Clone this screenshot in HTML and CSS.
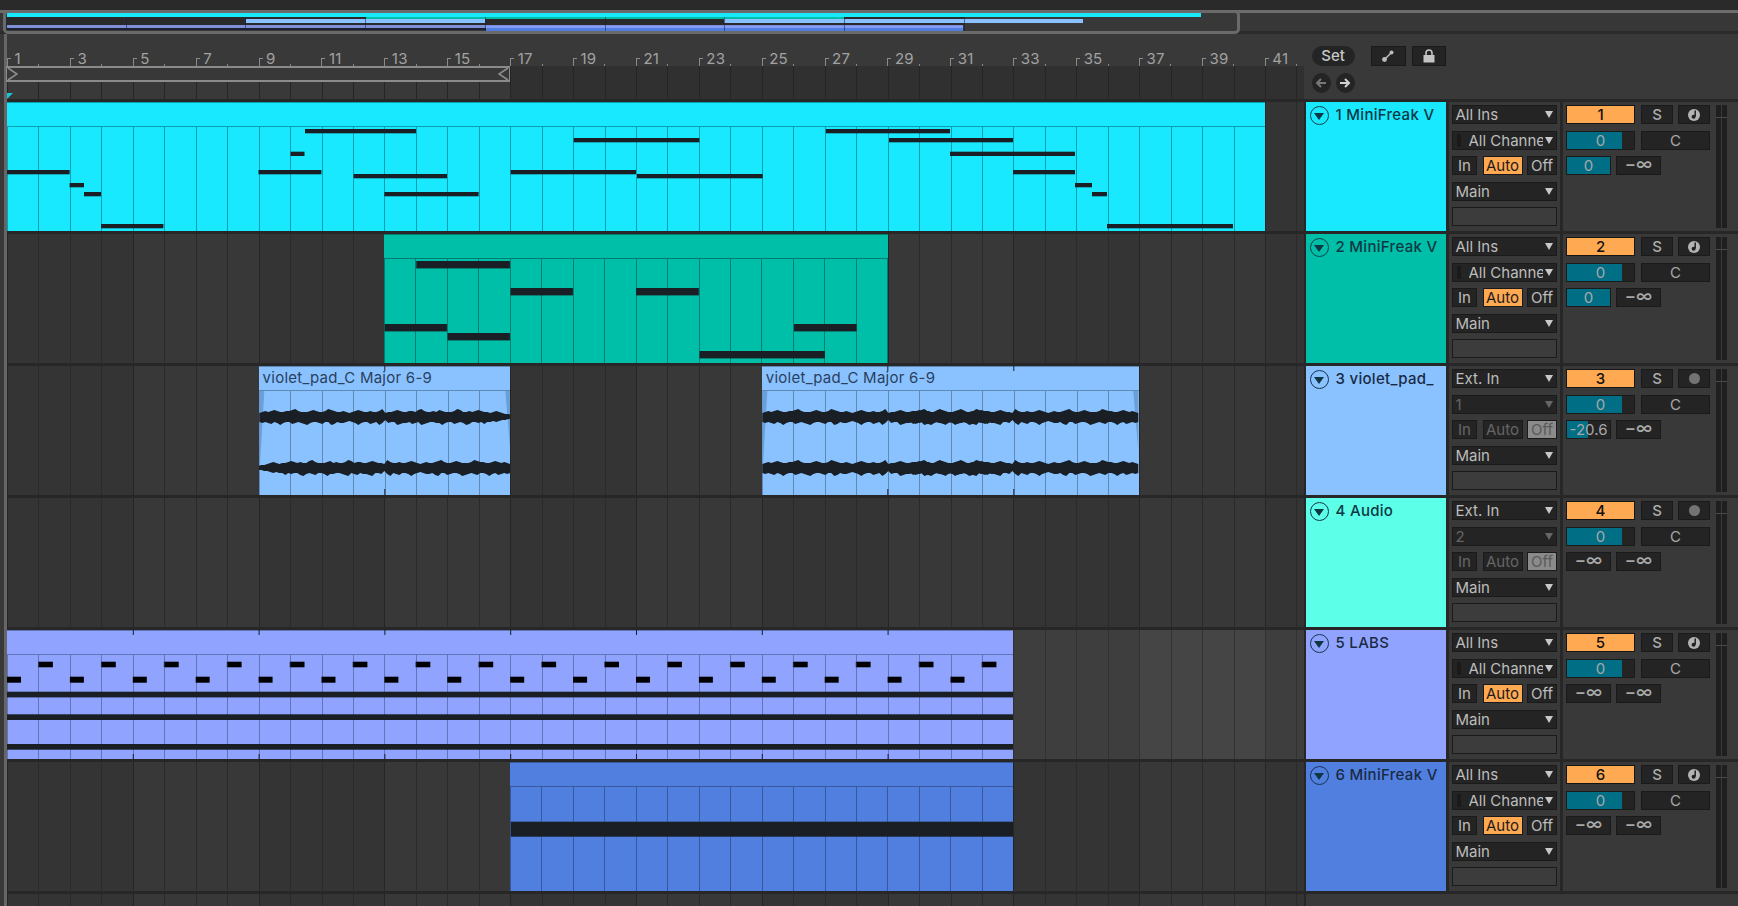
FILE: index.html
```html
<!DOCTYPE html>
<html lang="en">
<head>
<meta charset="utf-8">
<title>Arrangement</title>
<link rel="stylesheet" href="styles.css">
</head>
<body>
<svg class="defs" width="0" height="0" aria-hidden="true">
  <defs>
    <path id="wave" d="M0-4L3-5 6-6 9-5 12-6 15-7 18-6 21-5 24-5 27-6 30-6 33-7 36-8 39-6 42-5 45-5 48-5 51-6 54-7 57-6 60-5 63-5 66-6 69-8 72-7 75-6 78-5 81-5 84-6 87-5 90-4 93-5 96-6 99-7 102-6 105-5 108-5 111-6 114-5 117-5 120-6 123-8 126-4 129-5 132-5 135-6 138-7 141-6 144-5 147-5 150-6 153-6 156-5 159-7 162-8 165-6 168-5 171-5 174-6 177-5 180-7 183-6 186-5 189-5 192-5 195-6 198-8 201-7 204-5 207-5 210-6 213-5 216-6 219-7 222-6 225-5 228-5 231-4 234-5 237-6 240-5 243-4 246-3 249-3 252-2V2L249 2 246 3 243 3 240 4 237 5 234 4 231 5 228 5 225 7 222 5 219 6 216 5 213 5 210 7 207 8 204 6 201 5 198 6 195 7 192 5 189 5 186 6 183 8 180 6 177 6 174 5 171 5 168 6 165 7 162 8 159 5 156 6 153 7 150 5 147 6 144 6 141 7 138 8 135 5 132 5 129 6 126 3 123 6 120 8 117 5 114 6 111 7 108 5 105 5 102 6 99 8 96 6 93 5 90 4 87 5 84 6 81 6 78 5 75 7 72 8 69 5 66 5 63 7 60 6 57 5 54 5 51 6 48 8 45 7 42 6 39 5 36 6 33 7 30 5 27 5 24 6 21 8 18 6 15 5 12 7 9 6 6 5 3 6 0 5Z"/>
    <pattern id="labs" x="7" y="630" width="62.9" height="129" patternUnits="userSpaceOnUse">
      <rect x="0" y="46.7" width="14" height="6"/>
      <rect x="31.4" y="31.7" width="14.5" height="5.6"/>
    </pattern>
  </defs>
</svg>
<div class="app">
  <div class="overview">
    <div class="ov-strip"></div>
    <div class="ov-box">
      <i class="ov ov-dark"></i>
      <i class="ov ov-cyan"></i>
      <i class="ov ov-teal"></i>
      <i class="ov ov-violet-a"></i>
      <i class="ov ov-violet-b"></i>
      <i class="ov ov-blue"></i>
      <i class="ov ov-labs"></i>
      <i class="ov ov-labs-under"></i>
      <i class="ov ov-ticks"></i>
    </div>
  </div>

  <div class="main">
    <div class="head">
      <div class="arr-head">
        <div class="ruler">
          <span class="bar">1</span><span class="bar">3</span><span class="bar">5</span><span class="bar">7</span><span class="bar">9</span><span class="bar">11</span><span class="bar">13</span><span class="bar">15</span><span class="bar">17</span><span class="bar">19</span><span class="bar">21</span><span class="bar">23</span><span class="bar">25</span><span class="bar">27</span><span class="bar">29</span><span class="bar">31</span><span class="bar">33</span><span class="bar">35</span><span class="bar">37</span><span class="bar">39</span><span class="bar">41</span>
        </div>
        <div class="loopzone">
          <div class="loop">
            <svg class="loop-l" width="11" height="14" viewBox="0 0 11 14"><path d="M1 1L10 7 1 13" fill="none" stroke="#8c8c8c" stroke-width="1.6"/></svg>
            <svg class="loop-r" width="11" height="14" viewBox="0 0 11 14"><path d="M10 1L1 7 10 13" fill="none" stroke="#8c8c8c" stroke-width="1.6"/></svg>
          </div>
          <i class="playhead"></i>
        </div>
      </div>
      <div class="head-ctl">
        <div class="head-row">
          <button class="set">Set</button>
          <button class="sq">
            <svg width="14" height="14" viewBox="0 0 14 14"><path d="M3.5 10.5L10.5 3.5" stroke="#bdbdbd" stroke-width="1.4"/><circle cx="3.5" cy="10.5" r="2.4" fill="#bdbdbd"/><circle cx="10.5" cy="3.5" r="2" fill="#bdbdbd"/></svg>
          </button>
          <button class="sq">
            <svg width="14" height="14" viewBox="0 0 14 14"><rect x="1.5" y="6" width="11" height="7.5" fill="#c4c4c4"/><path d="M4 6.5V4a3 3 0 0 1 6 0v2.5" fill="none" stroke="#c4c4c4" stroke-width="1.6"/></svg>
          </button>
        </div>
        <div class="head-row arrows">
          <button class="round">
            <svg width="12" height="12" viewBox="0 0 12 12"><path d="M11 6H3M6 2L2 6 6 10" fill="none" stroke="#777" stroke-width="2"/></svg>
          </button>
          <button class="round">
            <svg width="12" height="12" viewBox="0 0 12 12"><path d="M1 6H9M6 2L10 6 6 10" fill="none" stroke="#d2d2d2" stroke-width="2"/></svg>
          </button>
        </div>
      </div>
    </div>

    <!-- Track 1 -->
    <div class="track t1">
      <div class="lane">
        <div class="clip clip-1">
          <div class="clip-title"></div>
          <div class="clip-body"></div>
          <svg class="notes" viewBox="7 102 1258 129">
            <rect x="7" y="170" width="62.6" height="4.3"/>
            <rect x="69.6" y="183" width="14.4" height="4.3"/>
            <rect x="84" y="192" width="17" height="4.3"/>
            <rect x="101" y="224" width="62.4" height="4.3"/>
            <rect x="258.5" y="170" width="62.9" height="4.3"/>
            <rect x="290.6" y="151.7" width="13.9" height="4.3"/>
            <rect x="305" y="129" width="111" height="4.3"/>
            <rect x="353.6" y="174" width="93.4" height="4.3"/>
            <rect x="384.4" y="192" width="94.2" height="4.3"/>
            <rect x="510.7" y="170" width="125.3" height="4.3"/>
            <rect x="573.7" y="138" width="125.7" height="4.3"/>
            <rect x="637" y="174" width="125.7" height="4.3"/>
            <rect x="825.8" y="129" width="124.2" height="4.3"/>
            <rect x="889" y="138" width="124" height="4.3"/>
            <rect x="950" y="151.7" width="125" height="4.3"/>
            <rect x="1013" y="170" width="62" height="4.3"/>
            <rect x="1075" y="183" width="17" height="4.3"/>
            <rect x="1092" y="192" width="15" height="4.3"/>
            <rect x="1107" y="224" width="126" height="4.3"/>
          </svg>
        </div>
      </div>
      <div class="thead"><span class="fold"><i></i></span><span class="tname">1 MiniFreak V</span></div>
      <div class="io">
        <div class="sel">All Ins</div>
        <div class="sel chan"><b></b><span class="chan-text">All Channel</span></div>
        <div class="mon"><span class="mbtn m-in">In</span><span class="mbtn m-auto on">Auto</span><span class="mbtn m-off">Off</span></div>
        <div class="sel">Main</div>
        <div class="blank"></div>
      </div>
      <div class="mix">
        <div class="mix-main">
          <div class="mrow"><span class="num">1</span><span class="btn solo">S</span><span class="btn solo"><svg width="14" height="14" viewBox="0 0 14 14"><circle cx="7" cy="7" r="6" fill="#b4b4b4"/><path d="M8.2 2.6V8.6" stroke="#1f1f1f" stroke-width="1.5"/><circle cx="6.6" cy="8.8" r="2" fill="#1f1f1f"/></svg></span></div>
          <div class="mrow"><span class="val wide"><i class="fill f-vol"></i><em>0</em></span><span class="val wide">C</span></div>
          <div class="mrow"><span class="val half"><i class="fill f-full"></i><em>0</em></span><span class="val half inf">−∞</span></div>
        </div>
        <div class="meter"><i></i><i></i></div>
      </div>
    </div>

    <!-- Track 2 -->
    <div class="track t2">
      <div class="lane">
        <div class="clip clip-2">
          <div class="clip-title"></div>
          <div class="clip-body"></div>
          <svg class="notes" viewBox="384.4 234 503.2 129">
            <rect x="416.7" y="261" width="93.6" height="7.4"/>
            <rect x="385" y="324" width="62.3" height="7.4"/>
            <rect x="448" y="333" width="62.3" height="7.4"/>
            <rect x="511" y="288" width="62.3" height="7.4"/>
            <rect x="636.5" y="288" width="62.7" height="7.4"/>
            <rect x="700" y="351" width="125.3" height="7.4"/>
            <rect x="794.5" y="324" width="62.5" height="7.4"/>
          </svg>
        </div>
      </div>
      <div class="thead"><span class="fold"><i></i></span><span class="tname">2 MiniFreak V</span></div>
      <div class="io">
        <div class="sel">All Ins</div>
        <div class="sel chan"><b></b><span class="chan-text">All Channel</span></div>
        <div class="mon"><span class="mbtn m-in">In</span><span class="mbtn m-auto on">Auto</span><span class="mbtn m-off">Off</span></div>
        <div class="sel">Main</div>
        <div class="blank"></div>
      </div>
      <div class="mix">
        <div class="mix-main">
          <div class="mrow"><span class="num">2</span><span class="btn solo">S</span><span class="btn solo"><svg width="14" height="14" viewBox="0 0 14 14"><circle cx="7" cy="7" r="6" fill="#b4b4b4"/><path d="M8.2 2.6V8.6" stroke="#1f1f1f" stroke-width="1.5"/><circle cx="6.6" cy="8.8" r="2" fill="#1f1f1f"/></svg></span></div>
          <div class="mrow"><span class="val wide"><i class="fill f-vol"></i><em>0</em></span><span class="val wide">C</span></div>
          <div class="mrow"><span class="val half"><i class="fill f-full"></i><em>0</em></span><span class="val half inf">−∞</span></div>
        </div>
        <div class="meter"><i></i><i></i></div>
      </div>
    </div>

    <!-- Track 3 -->
    <div class="track t3">
      <div class="lane">
        <div class="clip clip-3a">
          <div class="clip-title">violet_pad_C Major 6-9</div>
          <div class="clip-body"></div>
          <svg class="notes wavef" viewBox="258.7 366 251.6 129">
            <path class="fade" d="M259 391h5l-5 85zM510 391h-5l5 60z"/>
            <use href="#wave" transform="translate(259,417)"/>
            <use href="#wave" transform="translate(510,468) scale(-1,1)"/>
            <path class="tick" d="M384 366h1v5h-1zM384 489h1v6h-1z"/>
          </svg>
        </div>
        <div class="clip clip-3b">
          <div class="clip-title">violet_pad_C Major 6-9</div>
          <div class="clip-body"></div>
          <svg class="notes wavef" viewBox="762.7 366 377.4 129">
            <path class="fade" d="M763 391h5l-5 85zM1139 391h-5l5 60z"/>
            <use href="#wave" transform="translate(763,417)"/>
            <use href="#wave" transform="translate(1139,417) scale(-1,1)"/>
            <use href="#wave" transform="translate(763,468)"/>
            <use href="#wave" transform="translate(1139,468) scale(-1,1)"/>
            <path class="tick" d="M888 366h1v5h-1zM888 489h1v6h-1zM1014 366h1v5h-1zM1014 489h1v6h-1z"/>
          </svg>
        </div>
      </div>
      <div class="thead"><span class="fold"><i></i></span><span class="tname">3 violet_pad_</span></div>
      <div class="io">
        <div class="sel">Ext. In</div>
        <div class="sel dim">1</div>
        <div class="mon"><span class="mbtn m-in dimt">In</span><span class="mbtn m-auto dimt">Auto</span><span class="mbtn m-off offon">Off</span></div>
        <div class="sel">Main</div>
        <div class="blank"></div>
      </div>
      <div class="mix">
        <div class="mix-main">
          <div class="mrow"><span class="num">3</span><span class="btn solo">S</span><span class="btn solo"><i class="arm"></i></span></div>
          <div class="mrow"><span class="val wide"><i class="fill f-vol"></i><em>0</em></span><span class="val wide">C</span></div>
          <div class="mrow"><span class="val half"><i class="fill f-half"></i><em>-20.6</em></span><span class="val half inf">−∞</span></div>
        </div>
        <div class="meter"><i></i><i></i></div>
      </div>
    </div>

    <!-- Track 4 -->
    <div class="track t4">
      <div class="lane"></div>
      <div class="thead"><span class="fold"><i></i></span><span class="tname">4 Audio</span></div>
      <div class="io">
        <div class="sel">Ext. In</div>
        <div class="sel dim">2</div>
        <div class="mon"><span class="mbtn m-in dimt">In</span><span class="mbtn m-auto dimt">Auto</span><span class="mbtn m-off offon">Off</span></div>
        <div class="sel">Main</div>
        <div class="blank"></div>
      </div>
      <div class="mix">
        <div class="mix-main">
          <div class="mrow"><span class="num">4</span><span class="btn solo">S</span><span class="btn solo"><i class="arm"></i></span></div>
          <div class="mrow"><span class="val wide"><i class="fill f-vol"></i><em>0</em></span><span class="val wide">C</span></div>
          <div class="mrow"><span class="val half inf">−∞</span><span class="val half inf">−∞</span></div>
        </div>
        <div class="meter"><i></i><i></i></div>
      </div>
    </div>

    <!-- Track 5 -->
    <div class="track t5">
      <div class="lane lit">
        <div class="clip clip-5">
          <div class="clip-title"></div>
          <div class="clip-body"></div>
          <svg class="notes" viewBox="7 630 1006.4 129">
            <rect x="7" y="630" width="1006.4" height="129" fill="url(#labs)"/>
            <rect x="7" y="691.7" width="1006.4" height="5.7"/>
            <rect x="7" y="714.3" width="1006.4" height="5.7"/>
            <rect x="7" y="744" width="1006.4" height="5.7"/>
            <path d="M132.8 630h1v5h-1zM132.8 754h1v5h-1zM258.6 630h1v5h-1zM258.6 754h1v5h-1zM384.4 630h1v5h-1zM384.4 754h1v5h-1zM510.2 630h1v5h-1zM510.2 754h1v5h-1zM636 630h1v5h-1zM636 754h1v5h-1zM761.8 630h1v5h-1zM761.8 754h1v5h-1zM887.6 630h1v5h-1zM887.6 754h1v5h-1z"/>
          </svg>
        </div>
      </div>
      <div class="thead"><span class="fold"><i></i></span><span class="tname">5 LABS</span></div>
      <div class="io">
        <div class="sel">All Ins</div>
        <div class="sel chan"><b></b><span class="chan-text">All Channel</span></div>
        <div class="mon"><span class="mbtn m-in">In</span><span class="mbtn m-auto on">Auto</span><span class="mbtn m-off">Off</span></div>
        <div class="sel">Main</div>
        <div class="blank"></div>
      </div>
      <div class="mix">
        <div class="mix-main">
          <div class="mrow"><span class="num">5</span><span class="btn solo">S</span><span class="btn solo"><svg width="14" height="14" viewBox="0 0 14 14"><circle cx="7" cy="7" r="6" fill="#b4b4b4"/><path d="M8.2 2.6V8.6" stroke="#1f1f1f" stroke-width="1.5"/><circle cx="6.6" cy="8.8" r="2" fill="#1f1f1f"/></svg></span></div>
          <div class="mrow"><span class="val wide"><i class="fill f-vol"></i><em>0</em></span><span class="val wide">C</span></div>
          <div class="mrow"><span class="val half inf">−∞</span><span class="val half inf">−∞</span></div>
        </div>
        <div class="meter"><i></i><i></i></div>
      </div>
    </div>

    <!-- Track 6 -->
    <div class="track t6">
      <div class="lane">
        <div class="clip clip-6">
          <div class="clip-title"></div>
          <div class="clip-body"></div>
          <svg class="notes" viewBox="510.2 762 503.2 129">
            <rect x="511" y="821.7" width="502.4" height="15"/>
          </svg>
        </div>
      </div>
      <div class="thead"><span class="fold"><i></i></span><span class="tname">6 MiniFreak V</span></div>
      <div class="io">
        <div class="sel">All Ins</div>
        <div class="sel chan"><b></b><span class="chan-text">All Channel</span></div>
        <div class="mon"><span class="mbtn m-in">In</span><span class="mbtn m-auto on">Auto</span><span class="mbtn m-off">Off</span></div>
        <div class="sel">Main</div>
        <div class="blank"></div>
      </div>
      <div class="mix">
        <div class="mix-main">
          <div class="mrow"><span class="num">6</span><span class="btn solo">S</span><span class="btn solo"><svg width="14" height="14" viewBox="0 0 14 14"><circle cx="7" cy="7" r="6" fill="#b4b4b4"/><path d="M8.2 2.6V8.6" stroke="#1f1f1f" stroke-width="1.5"/><circle cx="6.6" cy="8.8" r="2" fill="#1f1f1f"/></svg></span></div>
          <div class="mrow"><span class="val wide"><i class="fill f-vol"></i><em>0</em></span><span class="val wide">C</span></div>
          <div class="mrow"><span class="val half inf">−∞</span><span class="val half inf">−∞</span></div>
        </div>
        <div class="meter"><i></i><i></i></div>
      </div>
    </div>

    <div class="tail"><div class="lane"></div><div class="tail-rest"></div></div>
  </div>
</div>
</body>
</html>
```
FILE: styles.css
```css
:root {
  --bar: 31.45px;
  --panel: #393939;
  --sep: #272727;
  --ctl: #242424;
  --ctl-b: #1a1a1a;
  --txt: #bdbdbd;
  --orange: #ffa952;
  --teal: #006f85;
}
* { box-sizing: border-box; }
html, body { margin: 0; padding: 0; background: var(--panel); overflow: hidden; }
body { width: 1738px; height: 906px; font-family: Inter, "Noto Sans", sans-serif; font-size: 15px; }
.defs { position: absolute; }
button { font: inherit; padding: 0; margin: 0; }
.app { width: 1738px; height: 906px; display: flex; flex-direction: column; position: relative; }

/* overview */
.overview { height: 34px; flex: none; background: #2a2a2a; padding-top: 10px; position: relative; }
.ov-strip { height: 24px; background: #373737; border-top: 3px solid #6c6c6c; border-bottom: 3px solid #2b2b2b; }
.ov-box { position: absolute; left: 3px; top: 10px; width: 1237px; height: 24px; background: #383838; border: 3px solid #6a6a6a; border-radius: 5px; overflow: hidden; }
.ov { position: absolute; display: block; }
.ov-dark { left: 1px; width: 957px; top: 4px; height: 8px; background: #2a2a2a; }
.ov-cyan { left: 1px; width: 1194px; top: 0; height: 4px; background: #18e9ff; }
.ov-teal { left: 360px; width: 477.5px; top: 4px; height: 2px; background: #00bfa8; }
.ov-violet-a { left: 239.5px; width: 239px; top: 6px; height: 3.5px; background: #89c2ff; }
.ov-violet-b { left: 717.7px; width: 359px; top: 6px; height: 3.5px; background: #89c2ff; }
.ov-blue { left: 480px; width: 477px; top: 13px; height: 6px; background: #517fe0; }
.ov-labs { left: 1px; width: 956px; top: 12px; height: 3px; background: #90a4ff; opacity: .8; }
.ov-labs-under { left: 1px; width: 479px; top: 15px; height: 2px; background: #1d2030; }
.ov-ticks { left: 0; width: 960px; top: 4px; height: 14px; background: repeating-linear-gradient(90deg, rgba(20,30,60,.55) 0 1px, transparent 1px 119.7px); }

/* main area */
.main { flex: 1; min-height: 0; margin-left: 4px; border-left: 3px solid #666; display: flex; flex-direction: column; background: var(--sep); }

.head { height: 68px; flex: none; display: flex; background: var(--panel); border-bottom: 3px solid var(--sep); }
.arr-head { width: 1297px; flex: none; display: flex; flex-direction: column; }
.ruler { height: 32px; flex: none; display: flex; }
.bar { flex: 0 0 62.9px; position: relative; padding: 16px 0 0 7.5px; color: #a2a2a2; font-size: 15px; line-height: 17px; letter-spacing: .2px; }
.bar::before { content: ""; position: absolute; left: 0; top: 24px; width: 3px; height: 8px; border-left: 1px solid #8a8a8a; border-top: 1px solid #8a8a8a; }
.bar::after { content: ""; position: absolute; left: 31.4px; top: 30px; width: 1px; height: 2px; background: #8a8a8a; }
.loopzone { height: 33px; flex: none; position: relative;
  background:
    repeating-linear-gradient(90deg, #252525 0 1px, transparent 1px var(--bar)),
    linear-gradient(90deg, #393939 0 504px, #303030 504px); }
.loop { width: 504px; height: 16px; margin-left: -1px; border: 2px solid #8a8a8a; border-width: 2px 1.5px; background: #383838; display: flex; justify-content: space-between; align-items: center; }
.loop-l, .loop-r { flex: none; }
.playhead { position: absolute; left: 0; top: 27px; width: 0; height: 0; border-top: 6px solid #16c6d8; border-right: 6px solid transparent; }

.head-ctl { margin-left: 2px; padding: 12px 0 0 5.5px; flex: 1; }
.head-row { display: flex; }
.arrows { margin-top: 7px; gap: 5px; }
.set { width: 43px; height: 20px; margin-right: 16.5px; background: var(--ctl); border: 0; border-radius: 10px; color: #c8c8c8; font-size: 15px; font-weight: 500; line-height: 20px; }
.sq { width: 34.5px; height: 20px; margin-right: 6px; background: var(--ctl); border: 1px solid var(--ctl-b); display: flex; align-items: center; justify-content: center; }
.round { width: 19px; height: 20px; border-radius: 50%; border: 0; background: var(--ctl); display: flex; align-items: center; justify-content: center; }

/* tracks */
.track { height: 132px; flex: none; display: flex; border-bottom: 3px solid var(--sep); }
.lane { width: 1297px; flex: none; position: relative;
  background-color: #343434;
  background-image:
    repeating-linear-gradient(90deg, #252525 0 1px, transparent 1px calc(var(--bar) * 4)),
    repeating-linear-gradient(90deg, #2a2a2a 0 1px, transparent 1px var(--bar)),
    repeating-linear-gradient(90deg, transparent 0 calc(var(--bar) * 4), #383838 calc(var(--bar) * 4) calc(var(--bar) * 8)); }
.lane.lit { background-color: #3e3e3e;
  background-image:
    repeating-linear-gradient(90deg, #313131 0 1px, transparent 1px var(--bar)),
    repeating-linear-gradient(90deg, transparent 0 calc(var(--bar) * 4), #454545 calc(var(--bar) * 4) calc(var(--bar) * 8)); }

.clip { position: absolute; top: 0; height: 129px; display: flex; flex-direction: column; background: var(--c); border-top: 1px solid var(--ln); }
.clip-title { height: 24px; flex: none; border-bottom: 1px solid var(--ln); background: var(--c); color: #2a3f5e; padding-left: 4px; line-height: 22px; font-size: 15px; letter-spacing: .25px; overflow: hidden; white-space: nowrap; }
.clip-body { flex: 1; background-image: repeating-linear-gradient(90deg, var(--ln) 0 1px, transparent 1px var(--bar)); }
.notes { position: absolute; left: 0; top: -1px; width: 100%; height: 129px; fill: #191f24; display: block; }
.wavef .fade { fill: #6b9fd8; }
.wavef .tick { fill: #1b2229; }

.t1 { --c: #18e9ff; --ln: #0aa0b4; --hd: #18e9ff; }
.t2 { --c: #00bfa8; --ln: #047c70; --hd: #00bfa8; }
.t3 { --c: #89c2ff; --ln: #5f88b4; --hd: #89c2ff; }
.t4 { --hd: #5cffe8; }
.t5 { --c: #90a4ff; --ln: #6474b8; --hd: #90a4ff; }
.t6 { --c: #517fe0; --ln: #38589e; --hd: #517fe0; }

.clip-1 { left: 0; width: calc(var(--bar) * 40); }
.clip-2 { left: calc(var(--bar) * 12); width: calc(var(--bar) * 16); }
.clip-3a { left: calc(var(--bar) * 8); width: calc(var(--bar) * 8); }
.clip-3b { left: calc(var(--bar) * 24); width: calc(var(--bar) * 12); }
.clip-5 { left: 0; width: calc(var(--bar) * 32); box-shadow: inset 1px 0 0 #a8ecf0; }
.clip-6 { left: calc(var(--bar) * 16); width: calc(var(--bar) * 16); }

.thead { width: 140px; flex: none; margin-left: 2px; background: var(--hd); display: flex; align-items: flex-start; padding: 4px 0 0 3.5px; gap: 7px; }
.fold { width: 19px; height: 19px; flex: none; border: 1.5px solid #0f3f4a; border-radius: 50%; display: flex; align-items: center; justify-content: center; }
.fold i { display: block; width: 0; height: 0; border-left: 5.5px solid transparent; border-right: 5.5px solid transparent; border-top: 7px solid #0e3742; margin-top: 1px; }
.t3 .fold, .t4 .fold, .t5 .fold, .t6 .fold { border-color: #173450; }
.tname { color: #0d3843; font-size: 15px; font-weight: 500; line-height: 17px; letter-spacing: .3px; white-space: nowrap; }
.t6 .tname, .t5 .tname, .t3 .tname { color: #1a2a44; }

.io { width: 111px; flex: none; margin-left: 3px; background: var(--panel); padding: 3px 3px 0; display: flex; flex-direction: column; gap: 6.5px; }
.sel { height: 19px; flex: none; background: var(--ctl); border: 1px solid var(--ctl-b); color: var(--txt); line-height: 17px; padding-left: 2.5px; position: relative; white-space: nowrap; overflow: hidden; }
.sel::after { content: ""; position: absolute; right: 3px; top: 5px; width: 0; height: 0; border-left: 4.5px solid transparent; border-right: 4.5px solid transparent; border-top: 7px solid #c8c8c8; }
.chan { padding-left: 15.5px; }
.chan b { position: absolute; left: 4px; top: 2px; bottom: 2px; width: 4px; background: #1a1a1a; }
.chan-text { display: block; width: 74px; overflow: hidden; }
.sel.dim { color: #666; }
.sel.dim::after { border-top-color: #666; }
.mon { height: 19px; flex: none; display: flex; }
.mbtn { display: block; height: 19px; background: var(--ctl); border: 1px solid var(--ctl-b); color: var(--txt); text-align: center; line-height: 17px; overflow: hidden; }
.m-in { width: 25px; }
.m-auto { width: 40px; margin-left: 5.5px; }
.m-off { width: 30px; margin-left: 4.5px; }
.mbtn.on { background: var(--orange); color: #1c1c1c; }
.mbtn.dimt { color: #666; }
.mbtn.offon { background: #8b8b8b; color: #5a5a5a; }
.blank { height: 19px; flex: none; background: #3c3c3c; border: 1px solid var(--ctl-b); }

.mix { flex: 1; margin-left: 3px; background: var(--panel); padding: 3px 0 0 3px; display: flex; }
.mix-main { width: 144px; flex: none; display: flex; flex-direction: column; gap: 6.5px; }
.mrow { height: 19px; display: flex; }
.num { width: 69px; height: 19px; background: var(--orange); border: 1px solid #161616; color: #111; font-weight: 500; text-align: center; line-height: 17px; }
.btn { height: 19px; width: 32px; background: var(--ctl); border: 1px solid var(--ctl-b); color: #adadad; display: flex; align-items: center; justify-content: center; }
.solo { margin-left: 6px; font-weight: 500; }
.solo + .solo { margin-left: 5px; }
.arm { display: block; width: 11px; height: 11px; border-radius: 50%; background: #737373; }
.val { height: 19px; background: var(--ctl); border: 1px solid var(--ctl-b); color: #a8a8a8; text-align: center; line-height: 17px; position: relative; }
.val em { font-style: normal; position: relative; }
.inf { font-size: 17px; line-height: 15px; font-weight: 500; }
.wide { width: 69px; }
.wide + .wide { margin-left: 6px; }
.half { width: 45px; }
.half + .half { margin-left: 5px; }
.fill { position: absolute; left: 0; top: 0; bottom: 0; background: var(--teal); }
.f-vol { width: 82%; }
.f-full { width: 100%; }
.f-half { width: 48%; }
.meter { margin-left: 6px; width: 11px; height: 123px; display: flex; gap: 1px; position: relative; }
.meter i { display: block; width: 5px; height: 123px; background: #1f1f1f; }
.meter::after { content: ""; position: absolute; left: 0; right: 0; top: 12px; height: 1px; background: #4a4a4a; }

.tail { flex: 1; display: flex; }
.tail-rest { flex: 1; margin-left: 2px; background: var(--panel); }
```
